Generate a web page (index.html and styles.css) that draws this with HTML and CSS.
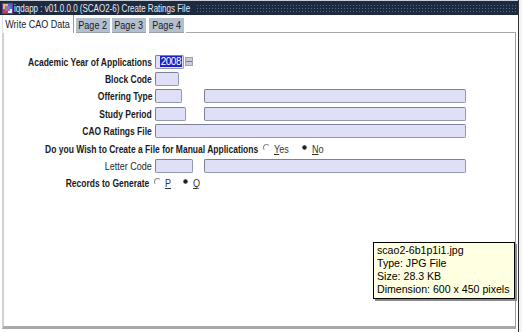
FILE: index.html
```html
<!DOCTYPE html>
<html>
<head>
<meta charset="utf-8">
<link rel="stylesheet" href="styles.css">
</head>
<body>
<div class="window">
  <div class="titlebar">
    <svg class="appicon" width="11" height="11" viewBox="0 0 11 11">
      <rect x="0" y="0" width="11" height="11" fill="#6a3f8c"/>
      <rect x="1" y="1" width="5" height="5" fill="#d8c070"/>
      <rect x="6" y="1" width="4" height="5" fill="#3b74c8"/>
      <rect x="1" y="6" width="5" height="4" fill="#c84040"/>
      <rect x="6" y="6" width="4" height="4" fill="#e8e8f0"/>
      <rect x="3" y="3" width="5" height="5" fill="#9a6cc0"/>
    </svg>
    <span class="title"><span class="sq">iqdapp : v01.0.0.0 (SCAO2-6) Create Ratings File</span></span>
    <span class="dots"></span>
  </div>
  <div class="tabs">
    <div class="tab active"><span class="sq">Write CAO Data</span></div>
    <div class="tab t2"><span class="sq">Page 2</span></div>
    <div class="tab t3"><span class="sq">Page 3</span></div>
    <div class="tab t4"><span class="sq">Page 4</span></div>
    <div class="tabfill"></div>
  </div>
  <div class="panel">
    <div class="form">
      <div class="row">
        <span class="lbl"><span class="sq">Academic Year of Applications</span></span>
        <span class="c1"><span class="field year"><span class="sel">2008</span></span><span class="lov">&#8212;</span></span>
      </div>
      <div class="row">
        <span class="lbl"><span class="sq">Block Code</span></span>
        <span class="c1"><span class="field w24"></span></span>
      </div>
      <div class="row">
        <span class="lbl"><span class="sq">Offering Type</span></span>
        <span class="c1"><span class="field w27"></span></span>
        <span class="c2"><span class="field wide"></span></span>
      </div>
      <div class="row">
        <span class="lbl"><span class="sq">Study Period</span></span>
        <span class="c1"><span class="field w31"></span></span>
        <span class="c2"><span class="field wide"></span></span>
      </div>
      <div class="row">
        <span class="lbl"><span class="sq">CAO Ratings File</span></span>
        <span class="c12"><span class="field full"></span></span>
      </div>
      <div class="row flexrow">
        <span class="lbl longlbl"><span class="sq">Do you Wish to Create a File for Manual Applications</span></span>
        <span class="radio empty"></span><span class="opt"><span class="sq"><u>Y</u>es</span></span>
        <span class="radio on gap"></span><span class="opt"><span class="sq"><u>N</u>o</span></span>
      </div>
      <div class="row">
        <span class="lbl plain"><span class="sq">Letter Code</span></span>
        <span class="c1"><span class="field w38"></span></span>
        <span class="c2"><span class="field wide"></span></span>
      </div>
      <div class="row flexrow">
        <span class="lbl reclbl"><span class="sq">Records to Generate</span></span>
        <span class="radio empty"></span><span class="opt"><span class="sq"><u>P</u></span></span>
        <span class="radio on gap2"></span><span class="opt"><span class="sq"><u>Q</u></span></span>
      </div>
    </div>
    <div class="tooltip">
      <div>scao2-6b1p1i1.jpg</div>
      <div>Type: JPG File</div>
      <div>Size: 28.3 KB</div>
      <div>Dimension: 600 x 450 pixels</div>
    </div>
  </div>
</div>
</body>
</html>
```

FILE: styles.css
```css
html, body {
  margin: 0;
  padding: 0;
  background: #ffffff;
}
body {
  width: 522px;
  height: 332px;
  overflow: hidden;
  background: #f4f4f4;
  font-family: "Liberation Sans", Arial, sans-serif;
}
.sq {
  display: inline-block;
  white-space: nowrap;
  transform: scaleX(0.86);
  transform-origin: right center;
  flex: none;
}
.window {
  width: 519px;
  height: 332px;
  border-right: 1px solid #303030;
  box-sizing: border-box;
  background: #ffffff;
  display: flex;
  flex-direction: column;
}
.titlebar {
  height: 15px;
  background: #1e2a40;
  display: flex;
  align-items: center;
  border-top: 1px solid #c8ccd4;
  box-sizing: border-box;
}
.appicon {
  margin-left: 2px;
  flex: none;
}
.title {
  color: #e8ecf4;
  font-size: 10px;
  margin-left: 1px;
  width: 178px;
  flex: none;
  white-space: nowrap;
}
.title .sq {
  transform: scaleX(0.8);
  transform-origin: left center;
}
.dots {
  flex: 1;
  height: 9px;
  margin: 0 2px 0 4px;
  background-image: radial-gradient(circle, #5a6884 0.8px, transparent 1px);
  background-size: 3px 3px;
}
.tabs {
  height: 18px;
  display: flex;
  align-items: flex-end;
  background: #ffffff;
  padding-left: 2px;
}
.tab {
  height: 15px;
  line-height: 15px;
  font-size: 10.5px;
  color: #1a1a1a;
  background: #b3bfcf;
  margin-right: 2px;
  box-sizing: border-box;
  border-bottom: 1px solid #9aa0aa;
  display: flex;
  justify-content: center;
  flex: none;
}
.tab .sq {
  transform-origin: center center;
}
.tab.active {
  width: 72px;
  height: 18px;
  line-height: 18px;
  background: #ffffff;
  border-left: 1px solid #e0e0e0;
  border-right: 1px solid #9a9a9a;
  border-bottom: none;
}
.t2 { width: 34px; }
.t3 { width: 34px; margin-right: 3px; }
.t4 { width: 35px; }
.tabfill {
  flex: 1;
  border-bottom: 1px solid #a8a8a8;
  margin-right: 2px;
}
.panel {
  flex: 1;
  position: relative;
  margin: 0 2px 3px 2px;
  border-left: 2px solid #d0d0d0;
  border-right: 1px solid #a0a0a0;
  border-bottom: 3px solid #a8a8a8;
  box-sizing: border-box;
}
.form {
  padding-top: 20px;
}
.row {
  height: 17.4px;
  display: grid;
  grid-template-columns: 148px 46px 262px;
  column-gap: 3px;
  align-items: center;
}
.lbl {
  display: flex;
  justify-content: flex-end;
  font-weight: bold;
  font-size: 10.5px;
  color: #1a1a1a;
  white-space: nowrap;
}
.lbl .sq {
  transform: scaleX(0.81);
}
.lbl.plain {
  font-weight: normal;
  color: #2a2a2a;
}
.lbl.plain .sq {
  transform: scaleX(0.86);
}
.c1 { grid-column: 2; display: flex; align-items: center; }
.c2 { grid-column: 3; display: flex; }
.c12 { grid-column: 2 / span 2; display: flex; }
.field {
  display: block;
  height: 14px;
  box-sizing: border-box;
  background: #dfdff8;
  border: 1px solid #9499aa;
  border-top-color: #7c8194;
  border-left-color: #7c8194;
  border-radius: 2px;
}
.w24 { width: 24px; }
.w27 { width: 27px; }
.w31 { width: 31px; }
.w38 { width: 38px; }
.wide { width: 262px; }
.full { width: 311px; }
.year {
  width: 29px;
  display: flex;
  align-items: center;
  justify-content: flex-end;
  padding-right: 1px;
}
.sel {
  background: #1c22c8;
  color: #ffffff;
  font-size: 10px;
  line-height: 11px;
  padding: 0 1px;
  letter-spacing: -0.5px;
}
.lov {
  width: 8px;
  height: 9px;
  margin-left: 1px;
  background: #c8ccd8;
  border: 1px solid #9ea4b4;
  box-sizing: border-box;
  font-size: 8px;
  line-height: 6px;
  text-align: center;
  color: #333;
  overflow: hidden;
}
.flexrow {
  display: flex;
  align-items: center;
}
.longlbl {
  width: 254px;
  flex: none;
}
.reclbl {
  width: 145px;
  flex: none;
}
.radio {
  width: 7px;
  height: 7px;
  border-radius: 50%;
  box-sizing: border-box;
  margin-left: 2px;
  margin-top: -3px;
  flex: none;
}
.radio.empty {
  border-top: 1px solid #8a8a8a;
  border-left: 1px solid #8a8a8a;
  border-right: 1px solid transparent;
  border-bottom: 1px solid transparent;
}
.radio.on {
  background: radial-gradient(circle, #222 0 1.8px, #d8d8d8 2.4px, transparent 3.2px);
}
.radio.gap { margin-left: 7px; }
.radio.gap2 { margin-left: 7px; }
.opt {
  font-size: 10.5px;
  color: #333;
  margin-left: 1px;
}
.opt .sq {
  transform-origin: left center;
}
.tooltip {
  position: absolute;
  left: 369px;
  top: 209px;
  width: 135px;
  padding: 1px 2px 2px 3px;
  background: #ffffe1;
  border: 1px solid #000000;
  box-shadow: 2px 2px 0 #8a8a8a;
  font-size: 10.6px;
  line-height: 13px;
  color: #000;
  white-space: nowrap;
}
```
